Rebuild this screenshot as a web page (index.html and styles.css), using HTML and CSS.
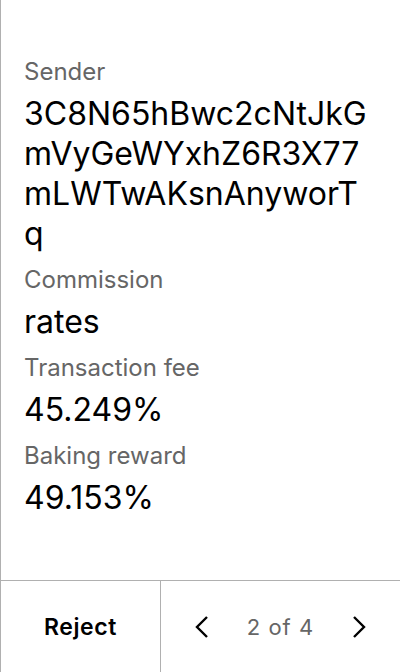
FILE: index.html
```html
<!DOCTYPE html>
<html>
<head>
<meta charset="utf-8">
<link rel="stylesheet" href="styles.css">
</head>
<body>
<div class="screen">
  <main class="content">
    <div class="field">
      <div class="label">Sender</div>
      <div class="value">3C8N65hBwc2cNtJkGmVyGeWYxhZ6R3X77mLWTwAKsnAnyworTq</div>
    </div>
    <div class="field">
      <div class="label">Commission</div>
      <div class="value">rates</div>
    </div>
    <div class="field">
      <div class="label">Transaction fee</div>
      <div class="value">45.249%</div>
    </div>
    <div class="field">
      <div class="label">Baking reward</div>
      <div class="value">49.153%</div>
    </div>
  </main>
  <footer class="bar">
    <div class="reject">Reject</div>
    <div class="pager">
      <svg class="chev" width="20" height="28" viewBox="0 0 20 28"><path d="M16 4 L6 14 L16 24" fill="none" stroke="#000" stroke-width="2.4"/></svg>
      <span class="count">2 of 4</span>
      <svg class="chev" width="20" height="28" viewBox="0 0 20 28"><path d="M4 4 L14 14 L4 24" fill="none" stroke="#000" stroke-width="2.4"/></svg>
    </div>
  </footer>
</div>
</body>
</html>
```
FILE: styles.css
```css
* { box-sizing: border-box; }
html, body { margin: 0; padding: 0; background: #fff; }
body { font-family: Inter, "Noto Sans", sans-serif; }
.screen {
  width: 400px;
  height: 672px;
  display: flex;
  flex-direction: column;
  border-left: 1px solid #b0b0b0;
}
.content {
  flex: 1;
  padding: 56px 28px 0 23px;
  display: flex;
  flex-direction: column;
}
.field { display: flex; flex-direction: column; margin-bottom: 10px; }
.label {
  font-size: 24px;
  line-height: 32px;
  color: #666;
  margin-bottom: 6px;
}
.value {
  font-size: 32px;
  line-height: 40px;
  color: #000;
  word-break: break-all;
}
.bar {
  height: 92px;
  border-top: 1px solid #b0b0b0;
  display: flex;
}
.reject {
  width: 160px;
  border-right: 1px solid #b0b0b0;
  display: flex;
  align-items: center;
  justify-content: center;
  font-size: 23px;
  font-weight: 600;
  letter-spacing: 0.6px;
  color: #000;
}
.pager {
  flex: 1;
  display: flex;
  align-items: center;
  justify-content: space-between;
  padding: 0 30px;
}
.count { font-size: 22px; letter-spacing: 1px; color: #666; }
```
